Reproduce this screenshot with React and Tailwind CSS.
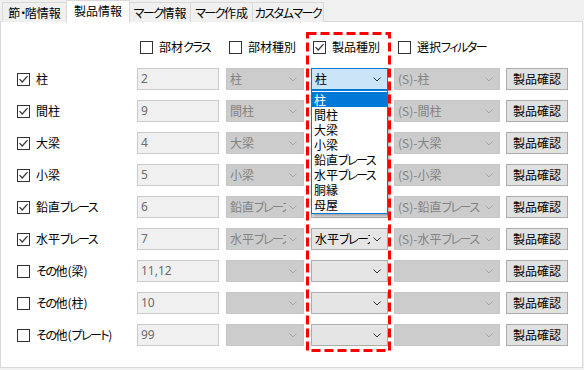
import React from "react";

const FONT = "font-['Noto_Sans_CJK_JP','Noto_Sans',sans-serif] [font-feature-settings:'palt']";

const J = ({ t }) =>
  t
    .split(/([\u3040-\u30FF]+)/)
    .map((p, i) =>
      /[\u3040-\u30FF]/.test(p) ? (
        <span key={i} className="tracking-[-1.5px]">
          {p}
        </span>
      ) : (
        <React.Fragment key={i}>{p}</React.Fragment>
      )
    );

const Check = ({ checked }) => (
  <span className="w-[13px] h-[13px] border border-[#333333] bg-white flex items-center justify-center shrink-0">
    {checked && (
      <svg width="11" height="11" viewBox="0 0 11 11">
        <path d="M1.5 5.2 L4.2 8 L9.5 2.2" fill="none" stroke="#333333" strokeWidth="1.2" />
      </svg>
    )}
  </span>
);

const Chev = ({ color }) => (
  <svg width="8" height="5" viewBox="0 0 8 5" className="shrink-0 ml-[3px] mr-[6px]">
    <path d="M0.5 0.5 L4 4 L7.5 0.5" fill="none" stroke={color} strokeWidth="1" />
  </svg>
);

const Combo = ({ variant, text, wClass }) => {
  const cls =
    variant === "disabled"
      ? "bg-[#cccccc] border-[#c6c6c6] text-[#838383]"
      : variant === "focused"
      ? "bg-[#cce4f7] border-[#0078d7] text-black"
      : "bg-[#e5e5e5] border-[#adadad] text-black";
  const chev = variant === "disabled" ? "#a6a6a6" : "#333333";
  return (
    <div className={`h-[22px] border flex items-center pl-[3px] shrink-0 ${cls} ${wClass}`}>
      <span className="flex-1 min-w-0 overflow-hidden whitespace-nowrap leading-[16px]">
        <J t={text} />
      </span>
      <Chev color={chev} />
    </div>
  );
};

const rows = [
  { label: "柱", checked: true, num: "2", d1: "柱", d2: "柱", d3: "(S)-柱" },
  { label: "間柱", checked: true, num: "9", d1: "間柱", d2: "", d3: "(S)-間柱" },
  { label: "大梁", checked: true, num: "4", d1: "大梁", d2: "", d3: "(S)-大梁" },
  { label: "小梁", checked: true, num: "5", d1: "小梁", d2: "", d3: "(S)-小梁" },
  { label: "鉛直ブレース", checked: true, num: "6", d1: "鉛直ブレース", d2: "", d3: "(S)-鉛直ブレース" },
  { label: "水平ブレース", checked: true, num: "7", d1: "水平ブレース", d2: "水平ブレース", d3: "(S)-水平ブレース" },
  { label: "その他(梁)", checked: false, num: "11,12", d1: "", d2: "", d3: "" },
  { label: "その他(柱)", checked: false, num: "10", d1: "", d2: "", d3: "" },
  { label: "その他(プレート)", checked: false, num: "99", d1: "", d2: "", d3: "" },
];

const listItems = ["柱", "間柱", "大梁", "小梁", "鉛直ブレース", "水平ブレース", "胴縁", "母屋"];

const tabs = [
  { t: "節・階情報", w: "w-[64px]" },
  { t: "製品情報", w: "w-[64px]", sel: true },
  { t: "マーク情報", w: "w-[60px]" },
  { t: "マーク作成", w: "w-[62px]" },
  { t: "カスタムマーク", w: "w-[72px]" },
];

export default function App() {
  return (
    <div className={`relative w-[584px] h-[370px] bg-[#f0f0f0] overflow-hidden text-[12px] text-black ${FONT}`}>
      {/* tabs */}
      <div className="flex items-end h-[22px] pl-[2px]">
        {tabs.map((tb, i) =>
          tb.sel ? (
            <div
              key={i}
              className={`${tb.w} h-[23px] -mb-[1px] relative z-10 bg-white border-l border-t border-r border-[#d9d9d9] flex items-center justify-center whitespace-nowrap leading-[16px] pb-[2px]`}
            >
              <J t={tb.t} />
            </div>
          ) : (
            <div
              key={i}
              className={`${tb.w} h-[20px] bg-[#f0f0f0] border-t border-[#d9d9d9] ${i === 0 ? "border-l" : ""} ${i === tabs.length - 1 ? "border-r" : ""} ${i > 0 && !tabs[i - 1].sel ? "border-l" : ""} flex items-center justify-center whitespace-nowrap leading-[16px]`}
            >
              <J t={tb.t} />
            </div>
          )
        )}
      </div>

      {/* panel */}
      <div className="w-[583px] h-[347px] -mt-[1px] bg-white border border-[#d9d9d9] pt-[14px] pl-[16px] flex flex-col gap-[10px]">
        {/* header */}
        <div className="h-[22px] flex items-center pl-[123px]">
          <div className="w-[89px] flex items-center gap-[6px]">
            <Check />
            <span className="leading-[16px]">
              <J t="部材クラス" />
            </span>
          </div>
          <div className="w-[84px] flex items-center gap-[6px]">
            <Check />
            <span className="leading-[16px]">部材種別</span>
          </div>
          <div className="w-[85px] flex items-center gap-[6px]">
            <Check checked />
            <span className="leading-[16px]">製品種別</span>
          </div>
          <div className="flex items-center gap-[6px]">
            <Check />
            <span className="leading-[16px]">
              <J t="選択フィルター" />
            </span>
          </div>
        </div>

        {rows.map((r, i) => (
          <div key={i} className="h-[22px] flex items-center">
            <div className="w-[120px] flex items-center gap-[6px] shrink-0">
              <Check checked={r.checked} />
              <span className="leading-[16px] whitespace-nowrap">
                <J t={r.label} />
              </span>
            </div>
            <div className="w-[82px] h-[22px] bg-[#f0f0f0] border border-[#cccccc] text-[#6d6d6d] flex items-center pl-[3px] shrink-0 leading-[16px] font-['Noto_Sans',sans-serif] text-[12px]">
              {r.num}
            </div>
            <div className="ml-[7px]">
              <Combo variant="disabled" text={r.d1} wClass="w-[78px]" />
            </div>
            <div className="ml-[7px] relative">
              <Combo variant={i === 0 ? "focused" : "enabled"} text={r.d2} wClass="w-[77px]" />
              {i === 0 && (
                <div className="absolute left-0 top-[22px] w-[77px] z-20 bg-white border border-[#0078d7] shadow-[2px_2px_3px_rgba(0,0,0,0.3)] py-[1px]">
                  {listItems.map((it, k) => (
                    <div
                      key={k}
                      className={`h-[15px] leading-[15px] pl-[2px] whitespace-nowrap ${k === 0 ? "bg-[#0078d7] text-white" : "text-black"}`}
                    >
                      <J t={it} />
                    </div>
                  ))}
                </div>
              )}
            </div>
            <div className="ml-[6px]">
              <Combo variant="disabled" text={r.d3} wClass="w-[106px]" />
            </div>
            <div className="ml-[6px] w-[62px] h-[22px] bg-[#e1e1e1] border border-[#adadad] flex items-center justify-center leading-[16px] shrink-0">
              製品確認
            </div>
          </div>
        ))}
      </div>

      {/* red dashed annotation */}
      <svg className="absolute left-[306px] top-[32px] z-30 pointer-events-none" width="85" height="320" viewBox="0 0 85 320">
        <rect x="1.5" y="1.5" width="82" height="317" fill="none" stroke="#ff0000" strokeWidth="3" strokeDasharray="9 4" />
      </svg>
    </div>
  );
}
